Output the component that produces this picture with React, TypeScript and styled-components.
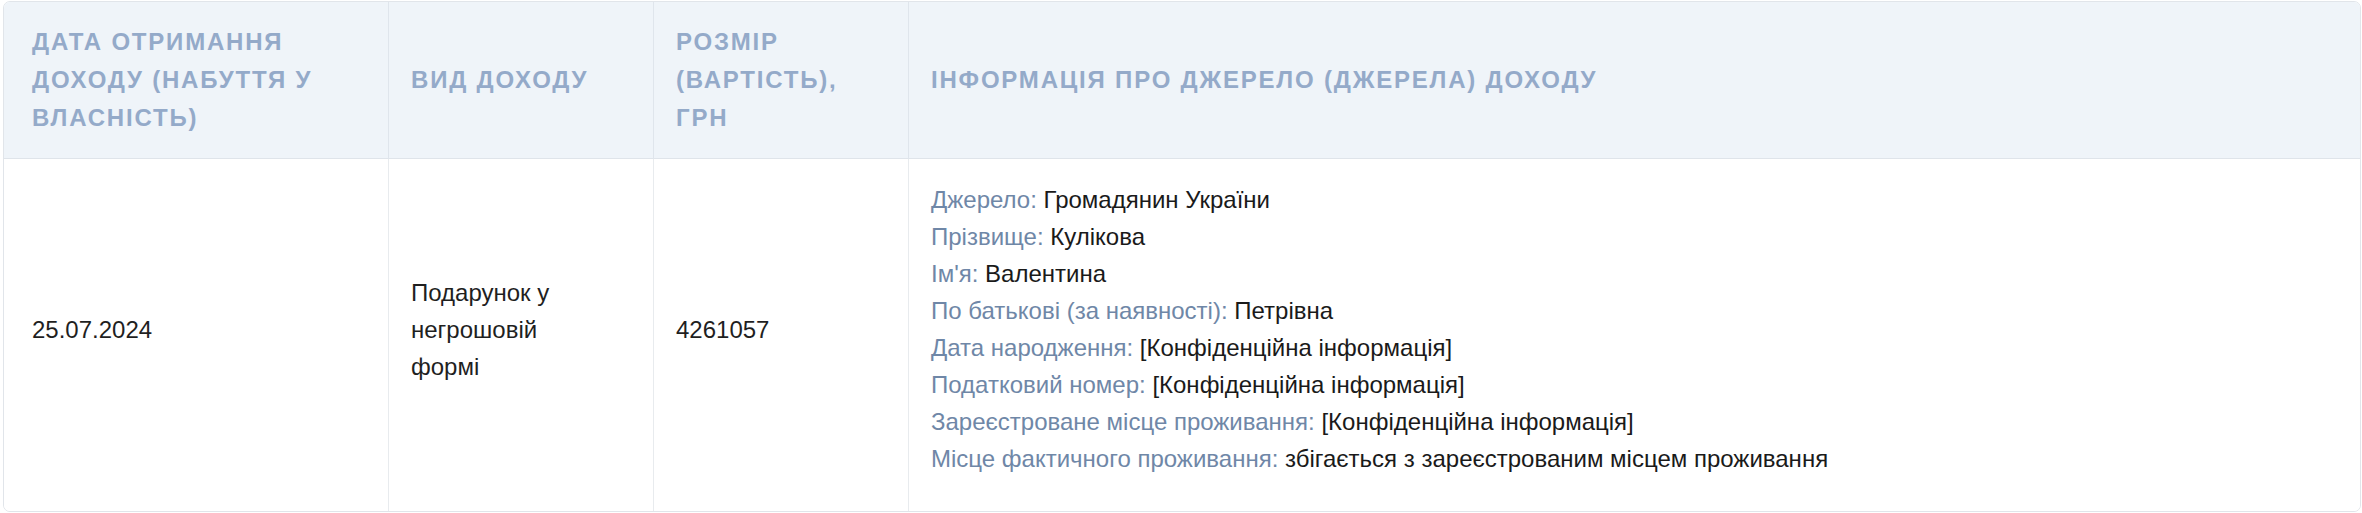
import React from "react";
import styled, { createGlobalStyle } from "styled-components";

const GlobalStyle = createGlobalStyle`
  html, body {
    margin: 0;
    padding: 0;
    background: #ffffff;
  }
  body {
    font-family: "Liberation Sans", Arial, Helvetica, sans-serif;
    -webkit-font-smoothing: antialiased;
  }
`;

const Page = styled.div`
  padding: 1px 1px 2px 3px;
`;

const Frame = styled.div`
  border: 1px solid #e1e5ea;
  border-radius: 7px;
  overflow: hidden;
`;

const Table = styled.table`
  width: 100%;
  border-collapse: separate;
  border-spacing: 0;
  table-layout: fixed;
`;

const Col = styled.col<{ $w?: number }>`
  width: ${(p) => (p.$w ? `${p.$w}px` : "auto")};
`;

const HeadCell = styled.th<{ $first?: boolean }>`
  background: #eff4f9;
  color: #94aac9;
  font-family: "Liberation Sans", Arial, Helvetica, sans-serif;
  font-weight: 700;
  font-size: 24px;
  line-height: 38px;
  letter-spacing: 1.8px;
  text-transform: uppercase;
  text-align: left;
  vertical-align: middle;
  padding: 21px 22px 21px ${(p) => (p.$first ? "28px" : "22px")};
  border-bottom: 1px solid #dfe4ea;
  border-left: ${(p) => (p.$first ? "none" : "1px solid #dfe5ec")};
`;

const Cell = styled.td<{ $first?: boolean; $narrow?: boolean }>`
  background: #ffffff;
  color: #1f1f1f;
  font-size: 24px;
  line-height: 37px;
  vertical-align: middle;
  padding-top: 22px;
  padding-bottom: 34px;
  padding-left: ${(p) => (p.$first ? "28px" : "22px")};
  padding-right: ${(p) => (p.$narrow ? "48px" : "22px")};
  border-left: ${(p) => (p.$first ? "none" : "1px solid #e8ebee")};
`;

const InfoLine = styled.div`
  white-space: nowrap;
`;

const Label = styled.span`
  color: #6f87a7;
`;

const Value = styled.span`
  color: #1a1a1a;
`;

const info: [string, string][] = [
  ["Джерело:", "Громадянин України"],
  ["Прізвище:", "Кулікова"],
  ["Ім'я:", "Валентина"],
  ["По батькові (за наявності):", "Петрівна"],
  ["Дата народження:", "[Конфіденційна інформація]"],
  ["Податковий номер:", "[Конфіденційна інформація]"],
  ["Зареєстроване місце проживання:", "[Конфіденційна інформація]"],
  ["Місце фактичного проживання:", "збігається з зареєстрованим місцем проживання"],
];

export default function App() {
  return (
    <>
      <GlobalStyle />
      <Page>
        <Frame>
          <Table>
            <colgroup>
              <Col $w={384} />
              <Col $w={265} />
              <Col $w={255} />
              <Col />
            </colgroup>
            <thead>
              <tr>
                <HeadCell $first>Дата отримання доходу (набуття у власність)</HeadCell>
                <HeadCell>Вид доходу</HeadCell>
                <HeadCell>Розмір (вартість), грн</HeadCell>
                <HeadCell>Інформація про джерело (джерела) доходу</HeadCell>
              </tr>
            </thead>
            <tbody>
              <tr>
                <Cell $first>25.07.2024</Cell>
                <Cell $narrow>Подарунок у негрошовій формі</Cell>
                <Cell>4261057</Cell>
                <Cell>
                  {info.map(([l, v]) => (
                    <InfoLine key={l}>
                      <Label>{l}</Label> <Value>{v}</Value>
                    </InfoLine>
                  ))}
                </Cell>
              </tr>
            </tbody>
          </Table>
        </Frame>
      </Page>
    </>
  );
}
